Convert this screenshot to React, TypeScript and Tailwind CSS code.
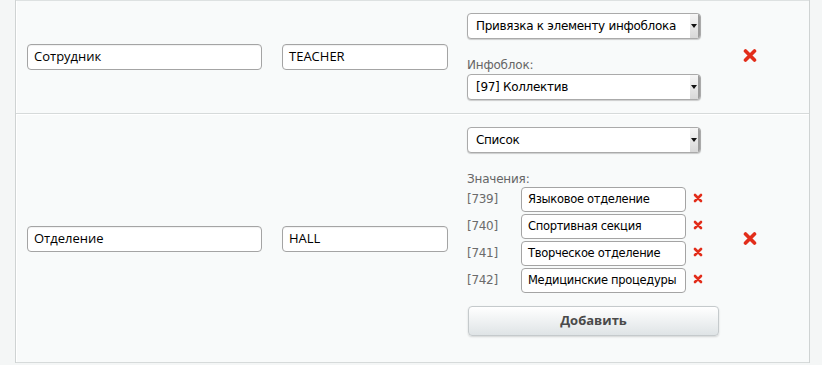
import React from "react";

const BigX = () => (
  <svg width="14" height="13" viewBox="0 0 14 13">
    <path d="M2.5 2 L11.5 11 M11.5 2 L2.5 11" stroke="#e22d1a" strokeWidth="3.6" strokeLinecap="round" />
  </svg>
);

const SmallX = () => (
  <svg width="10" height="10" viewBox="0 0 10 10">
    <path d="M2 2 L8 8 M8 2 L2 8" stroke="#e22d1a" strokeWidth="2.6" strokeLinecap="round" />
  </svg>
);

function TextInput({ value, w }: { value: string; w: string }) {
  return (
    <div
      className={`${w} flex h-[26px] items-center whitespace-nowrap rounded-[4px] border border-[#a4a4a4] bg-white pl-[6px] font-['Open_Sans',sans-serif] text-[13px] text-black shadow-[inset_0_1px_1px_rgba(0,0,0,0.06)]`}
    >
      {value}
    </div>
  );
}

function Select({ text }: { text: string }) {
  return (
    <div className="flex h-[26px] w-[234px] items-stretch overflow-hidden rounded-[4px] border border-[#aaaaaa] bg-white shadow-[0_1px_1px_rgba(0,0,0,0.18)]">
      <div className="flex flex-1 items-center whitespace-nowrap pl-[8px] font-['DejaVu_Sans',sans-serif] text-[12px] tracking-[-0.3px] text-black">{text}</div>
      <div className="flex w-[10px] items-center justify-center border-r-[2px] border-[#9c9c9c] bg-gradient-to-b from-[#f6f6f6] to-[#d8d8d8]">
        <svg width="6" height="4" viewBox="0 0 6 4">
          <path d="M0 0 H6 L3 4 Z" fill="#111" />
        </svg>
      </div>
    </div>
  );
}

function ValueRow({ id, value }: { id: string; value: string }) {
  return (
    <div className="flex h-[25px] items-center">
      <div className="w-[54px] pb-[2px] font-['DejaVu_Sans',sans-serif] text-[12px] tracking-[-0.3px] text-[#6b6b6b]">[{id}]</div>
      <div className="flex h-[25px] w-[165px] items-center whitespace-nowrap rounded-[4px] border border-[#a4a4a4] bg-white pl-[6px] font-['DejaVu_Sans',sans-serif] text-[11.5px] tracking-[-0.3px] text-black">
        {value}
      </div>
      <div className="ml-[7px] flex items-center pb-[3px]">
        <SmallX />
      </div>
    </div>
  );
}

export default function App() {
  return (
    <div className="h-[365px] w-[822px] bg-[#f4f6f6]">
      <div className="ml-[15px] w-[795px] border-l border-r border-[#cfd3d3] bg-[#f8fafa]">
        {/* Row 1 */}
        <div className="flex h-[114px] border-b border-t border-b-[#d6dada] border-t-[#dde1e1]">
          <div className="flex flex-1 border-l border-white">
            <div className="flex items-center pl-[10px]">
              <TextInput value="Сотрудник" w="w-[235px]" />
            </div>
            <div className="flex items-center pl-[20px]">
              <TextInput value="TEACHER" w="w-[166px]" />
            </div>
            <div className="flex flex-col pl-[19px] pt-[12px]">
              <Select text="Привязка к элементу инфоблока" />
              <div className="mt-[18px] h-[17px] font-['DejaVu_Sans',sans-serif] text-[12px] tracking-[-0.2px] leading-[17px] text-[#666666]">Инфоблок:</div>
              <Select text="[97] Коллектив" />
            </div>
            <div className="flex items-center pb-[4px] pl-[42px]">
              <BigX />
            </div>
          </div>
        </div>
        {/* Row 2 */}
        <div className="flex h-[249px] border-b border-[#d6dada]">
          <div className="flex flex-1 border-l border-t border-white">
            <div className="flex items-center pl-[10px]">
              <TextInput value="Отделение" w="w-[235px]" />
            </div>
            <div className="flex items-center pl-[20px]">
              <TextInput value="HALL" w="w-[166px]" />
            </div>
            <div className="flex flex-col pl-[19px] pt-[12px]">
              <Select text="Список" />
              <div className="mt-[18px] h-[16px] font-['DejaVu_Sans',sans-serif] text-[12px] tracking-[-0.2px] leading-[16px] text-[#666666]">Значения:</div>
              <div className="flex flex-col gap-[2px]">
                <ValueRow id="739" value="Языковое отделение" />
                <ValueRow id="740" value="Спортивная секция" />
                <ValueRow id="741" value="Творческое отделение" />
                <ValueRow id="742" value="Медицинские процедуры" />
              </div>
              <button className="ml-[1px] mt-[13px] flex h-[30px] w-[251px] items-center justify-center rounded-[4px] border border-[#c5cacc] bg-gradient-to-b from-[#ffffff] to-[#dfe4e6] font-['Open_Sans',sans-serif] text-[13px] font-bold text-[#4a4a4a] shadow-[0_1px_2px_rgba(0,0,0,0.15)]">
                Добавить
              </button>
            </div>
            <div className="flex items-center pl-[24px]">
              <BigX />
            </div>
          </div>
        </div>
      </div>
    </div>
  );
}
